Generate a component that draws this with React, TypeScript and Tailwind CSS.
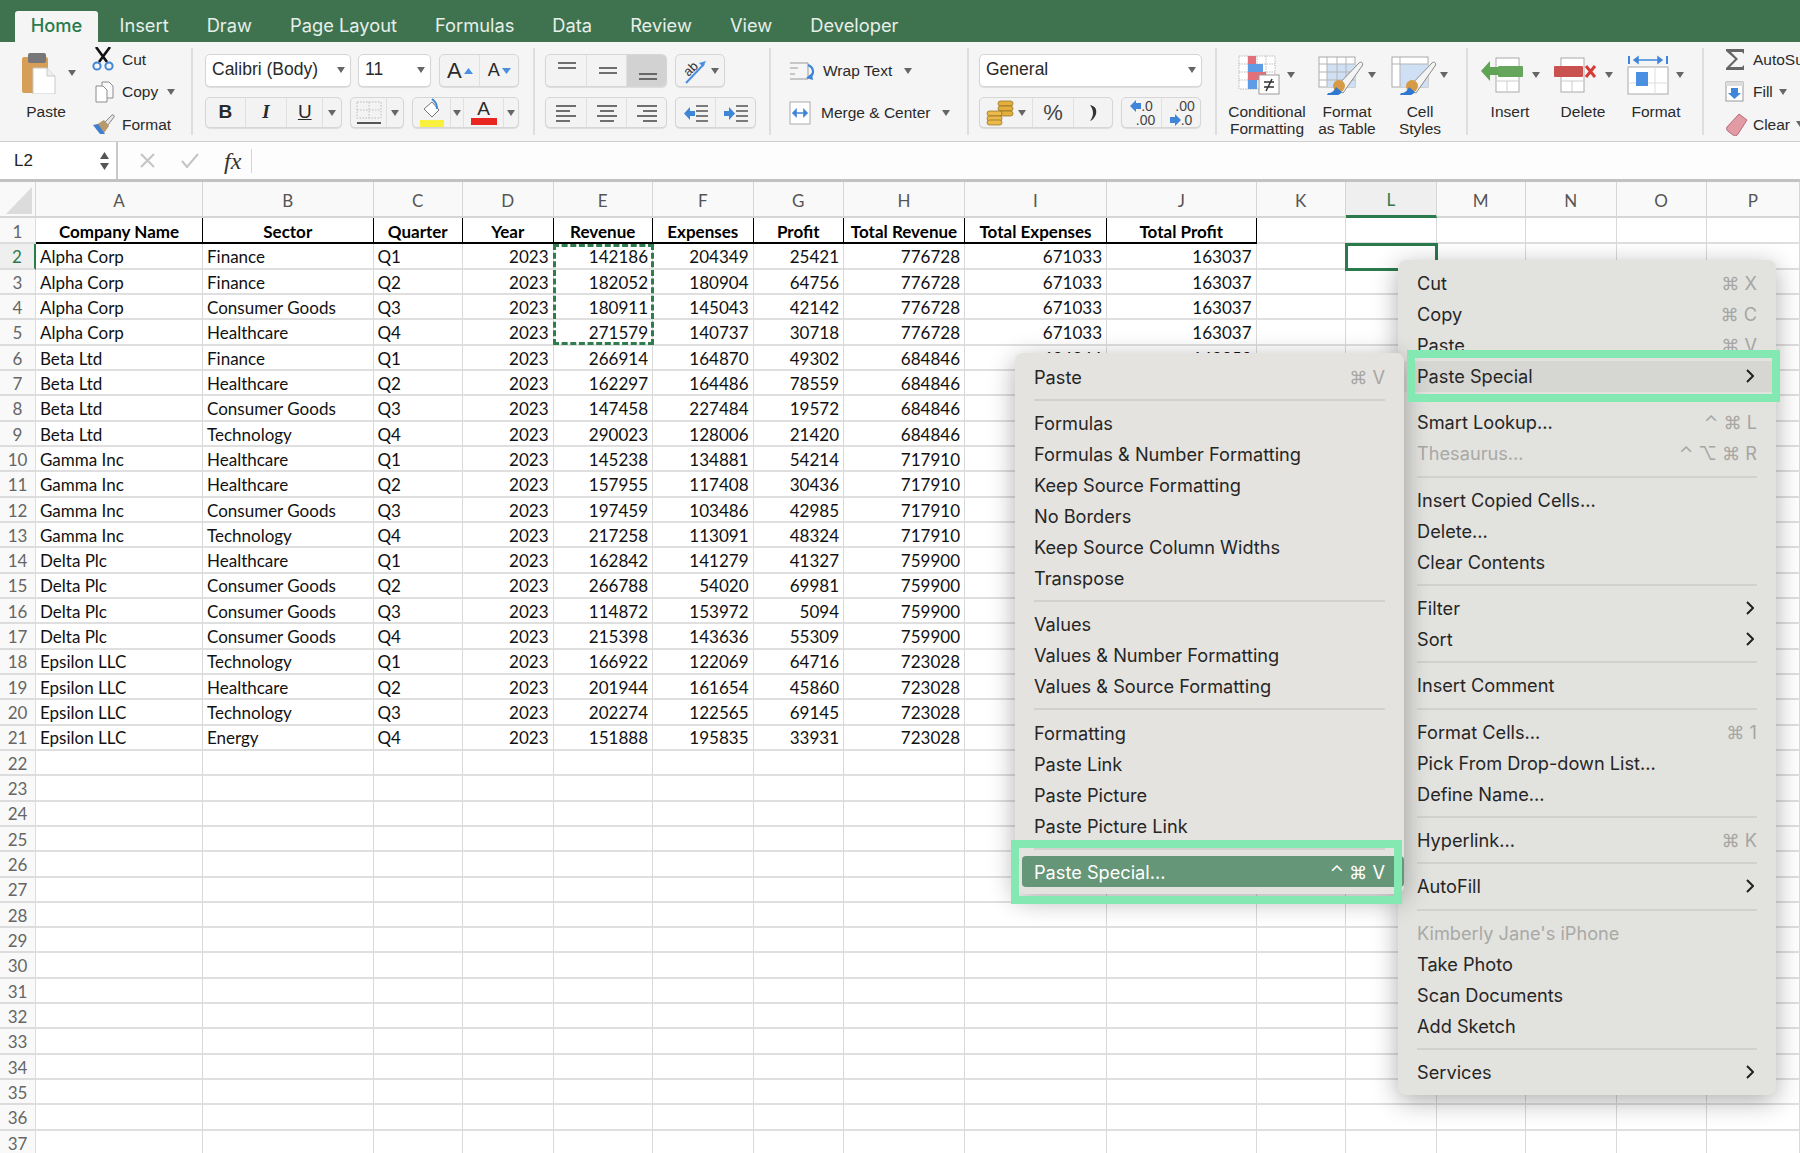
import React from 'react'

// Spreadsheet rows: company, sector, quarter, year, revenue, expenses, profit, totals
const ROWS = [
  ['Alpha Corp', 'Finance', 'Q1', '2023', '142186', '204349', '25421', '776728', '671033', '163037'],
  ['Alpha Corp', 'Finance', 'Q2', '2023', '182052', '180904', '64756', '776728', '671033', '163037'],
  ['Alpha Corp', 'Consumer Goods', 'Q3', '2023', '180911', '145043', '42142', '776728', '671033', '163037'],
  ['Alpha Corp', 'Healthcare', 'Q4', '2023', '271579', '140737', '30718', '776728', '671033', '163037'],
  ['Beta Ltd', 'Finance', 'Q1', '2023', '266914', '164870', '49302', '684846', '684846', '168853'],
  ['Beta Ltd', 'Healthcare', 'Q2', '2023', '162297', '164486', '78559', '684846', '', ''],
  ['Beta Ltd', 'Consumer Goods', 'Q3', '2023', '147458', '227484', '19572', '684846', '', ''],
  ['Beta Ltd', 'Technology', 'Q4', '2023', '290023', '128006', '21420', '684846', '', ''],
  ['Gamma Inc', 'Healthcare', 'Q1', '2023', '145238', '134881', '54214', '717910', '', ''],
  ['Gamma Inc', 'Healthcare', 'Q2', '2023', '157955', '117408', '30436', '717910', '', ''],
  ['Gamma Inc', 'Consumer Goods', 'Q3', '2023', '197459', '103486', '42985', '717910', '', ''],
  ['Gamma Inc', 'Technology', 'Q4', '2023', '217258', '113091', '48324', '717910', '', ''],
  ['Delta Plc', 'Healthcare', 'Q1', '2023', '162842', '141279', '41327', '759900', '', ''],
  ['Delta Plc', 'Consumer Goods', 'Q2', '2023', '266788', '54020', '69981', '759900', '', ''],
  ['Delta Plc', 'Consumer Goods', 'Q3', '2023', '114872', '153972', '5094', '759900', '', ''],
  ['Delta Plc', 'Consumer Goods', 'Q4', '2023', '215398', '143636', '55309', '759900', '', ''],
  ['Epsilon LLC', 'Technology', 'Q1', '2023', '166922', '122069', '64716', '723028', '', ''],
  ['Epsilon LLC', 'Healthcare', 'Q2', '2023', '201944', '161654', '45860', '723028', '', ''],
  ['Epsilon LLC', 'Technology', 'Q3', '2023', '202274', '122565', '69145', '723028', '', ''],
  ['Epsilon LLC', 'Energy', 'Q4', '2023', '151888', '195835', '33931', '723028', '', ''],
]
const HEADINGS = ['Company Name', 'Sector', 'Quarter', 'Year', 'Revenue', 'Expenses', 'Profit', 'Total Revenue', 'Total Expenses', 'Total Profit']
const COLUMNS = ['A', 'B', 'C', 'D', 'E', 'F', 'G', 'H', 'I', 'J', 'K', 'L', 'M', 'N', 'O', 'P']
const TABS = ['Insert', 'Draw', 'Page Layout', 'Formulas', 'Data', 'Review', 'View', 'Developer']

type MenuEntry = { label?: string; keys?: string; arrow?: boolean; dim?: boolean; active?: boolean; hover?: boolean; sep?: boolean }

const CONTEXT_MENU: MenuEntry[] = [
  { label: 'Cut', keys: '⌘ X' },
  { label: 'Copy', keys: '⌘ C' },
  { label: 'Paste', keys: '⌘ V' },
  { label: 'Paste Special', arrow: true, hover: true },
  { sep: true },
  { label: 'Smart Lookup...', keys: '⌃ ⌘ L' },
  { label: 'Thesaurus...', keys: '⌃ ⌥ ⌘ R', dim: true },
  { sep: true },
  { label: 'Insert Copied Cells...' },
  { label: 'Delete...' },
  { label: 'Clear Contents' },
  { sep: true },
  { label: 'Filter', arrow: true },
  { label: 'Sort', arrow: true },
  { sep: true },
  { label: 'Insert Comment' },
  { sep: true },
  { label: 'Format Cells...', keys: '⌘ 1' },
  { label: 'Pick From Drop-down List...' },
  { label: 'Define Name...' },
  { sep: true },
  { label: 'Hyperlink...', keys: '⌘ K' },
  { sep: true },
  { label: 'AutoFill', arrow: true },
  { sep: true },
  { label: "Kimberly Jane's iPhone", dim: true },
  { label: 'Take Photo' },
  { label: 'Scan Documents' },
  { label: 'Add Sketch' },
  { sep: true },
  { label: 'Services', arrow: true },
]

const PASTE_MENU: MenuEntry[] = [
  { label: 'Paste', keys: '⌘ V' },
  { sep: true },
  { label: 'Formulas' },
  { label: 'Formulas & Number Formatting' },
  { label: 'Keep Source Formatting' },
  { label: 'No Borders' },
  { label: 'Keep Source Column Widths' },
  { label: 'Transpose' },
  { sep: true },
  { label: 'Values' },
  { label: 'Values & Number Formatting' },
  { label: 'Values & Source Formatting' },
  { sep: true },
  { label: 'Formatting' },
  { label: 'Paste Link' },
  { label: 'Paste Picture' },
  { label: 'Paste Picture Link' },
  { sep: true },
  { label: 'Paste Special...', keys: '⌃ ⌘ V', active: true },
]

function Caret({ className = '' }: { className?: string }) {
  return (
    <svg width="8" height="6" viewBox="0 0 8 6" className={className}>
      <path d="M0 0h8L4 6z" fill="#666" />
    </svg>
  )
}

function Divider({ className }: { className: string }) {
  return <div className={`mt-[6px] h-[87px] w-[2px] shrink-0 bg-[#dedede] ${className}`} />
}

// Bordered group of ribbon buttons
function Group({ className, children }: { className: string; children: React.ReactNode }) {
  return (
    <div className={`flex rounded-[5px] border border-[#d6d6d6] bg-[#f3f3f3] shadow-[0_1px_1px_rgba(0,0,0,0.1)] ${className}`}>
      {children}
    </div>
  )
}

function Cell({ className, children }: { className: string; children?: React.ReactNode }) {
  return <div className={`flex h-full items-center justify-center border-r border-[#e0e0e0] last:border-r-0 ${className}`}>{children}</div>
}

function PasteIcon() {
  return (
    <svg width="36" height="42" viewBox="0 0 36 42">
      <rect x="1" y="5" width="26" height="36" rx="2" fill="#d59f58" />
      <rect x="7" y="1" width="18" height="10" rx="2" fill="#77777a" />
      <path d="M12 16h14l8 8v18H12z" fill="#fff" stroke="#c9c9c9" />
      <path d="M26 16v8h8" fill="#eee" stroke="#c9c9c9" />
    </svg>
  )
}

function ScissorsIcon() {
  return (
    <svg width="22" height="24" viewBox="0 0 22 24">
      <path d="M4 0l11 15M18 0L7 15" stroke="#111" strokeWidth="2.6" fill="none" />
      <circle cx="5" cy="19" r="3.6" stroke="#3f86d8" strokeWidth="2" fill="none" />
      <circle cx="17" cy="19" r="3.6" stroke="#3f86d8" strokeWidth="2" fill="none" />
    </svg>
  )
}

function CopyIcon() {
  return (
    <svg width="20" height="22" viewBox="0 0 20 22">
      <path d="M7 1h7l4 4v12H7z" fill="#fafafa" stroke="#8c8c8c" />
      <path d="M1 5h7l4 4v12H1z" fill="#fff" stroke="#8c8c8c" />
    </svg>
  )
}

function BrushIcon() {
  return (
    <svg width="24" height="22" viewBox="0 0 24 22">
      <path d="M13 9l7-7c1-1 3 1 2 2l-6 8z" fill="#e6e6e6" stroke="#8a8a8a" />
      <path d="M4 12l8-5 5 6-5 7z" fill="#b79a6c" />
      <path d="M1 12l5-1 7 10-5 0z" fill="#3f7fd0" />
    </svg>
  )
}

function BorderIcon() {
  return (
    <svg width="26" height="24" viewBox="0 0 26 24">
      <path d="M1 1h24v16H1zM13 1v16M1 9h24" stroke="#bbb" strokeDasharray="1.5 1.5" fill="none" />
      <path d="M1 22h24" stroke="#555" strokeWidth="2" />
    </svg>
  )
}

function FillIcon() {
  return (
    <svg width="26" height="30" viewBox="0 0 26 30">
      <path d="M5 11l8-7 7 8-7 7z" fill="#fff" stroke="#777" />
      <path d="M13 1c3 2 5 6 5 10" stroke="#3f86d8" strokeWidth="2" fill="none" />
      <rect x="1" y="22" width="24" height="7" fill="#f8f13f" />
    </svg>
  )
}

function AlignLines({ kind }: { kind: string }) {
  const paths: Record<string, string> = {
    top: 'M3 3h18M3 8h18',
    middle: 'M3 8h18M3 13h18',
    bottom: 'M3 14h18M3 19h18',
    left: 'M1 4h20M1 9h14M1 14h20M1 19h14',
    center: 'M1 4h20M4 9h14M1 14h20M4 19h14',
    right: 'M1 4h20M7 9h14M1 14h20M7 19h14',
  }
  return (
    <svg width="22" height="22" viewBox="0 0 22 22">
      <path d={paths[kind]} stroke="#444" strokeWidth="1.4" fill="none" />
    </svg>
  )
}

function IndentIcon({ flip }: { flip?: boolean }) {
  return (
    <svg width="26" height="22" viewBox="0 0 26 22">
      <path d="M13 4h12M13 9h12M13 14h12M13 19h12" stroke="#555" strokeWidth="1.4" />
      {flip ? <path d="M1 9h5V5l6 6.500-6 6.500v-4H1z" fill="#3f86d8" /> : <path d="M12 9H7V5l-6 6.500L7 18v-4h5z" fill="#3f86d8" />}
    </svg>
  )
}

function OrientationIcon() {
  return (
    <svg width="26" height="28" viewBox="0 0 26 28">
      <path d="M5 26L23 7" stroke="#4a8fe0" strokeWidth="2" />
      <path d="M25 4l-7 2 4 4z" fill="#4a8fe0" />
      <text x="3" y="17" fontSize="13" fill="#333" transform="rotate(-45 9 13)" className="font-['Liberation_Sans',sans-serif]">ab</text>
    </svg>
  )
}

function WrapIcon() {
  return (
    <svg width="28" height="18" viewBox="0 0 28 18">
      <path d="M1 1h18v16H1M1 6h8M1 12h5" stroke="#999" fill="none" />
      <path d="M19 3c7 3 6 10 1 12" stroke="#3f86d8" strokeWidth="2.2" fill="none" />
      <path d="M23 11l-6 5 7 2z" fill="#3f86d8" />
    </svg>
  )
}

function MergeIcon() {
  return (
    <svg width="22" height="24" viewBox="0 0 22 24">
      <rect x="1" y="1" width="20" height="22" fill="#fff" stroke="#aaa" />
      <path d="M4 12h14M4 12l3-3v6zM18 12l-3-3v6z" stroke="#3f86d8" strokeWidth="1.6" fill="#3f86d8" />
    </svg>
  )
}

function CoinsIcon() {
  return (
    <svg width="28" height="26" viewBox="0 0 28 26">
      <rect x="12" y="1" width="15" height="5" rx="2.5" fill="#e2ae3e" stroke="#8d6a1c" strokeWidth="0.7" />
      <rect x="12" y="6" width="15" height="5" rx="2.5" fill="#e2ae3e" stroke="#8d6a1c" strokeWidth="0.7" />
      <rect x="12" y="11" width="15" height="5" rx="2.5" fill="#e2ae3e" stroke="#8d6a1c" strokeWidth="0.7" />
      <rect x="1" y="11" width="15" height="5" rx="2.5" fill="#eab94a" stroke="#8d6a1c" strokeWidth="0.7" />
      <rect x="1" y="16" width="15" height="5" rx="2.5" fill="#eab94a" stroke="#8d6a1c" strokeWidth="0.7" />
      <rect x="1" y="20" width="15" height="5" rx="2.5" fill="#eab94a" stroke="#8d6a1c" strokeWidth="0.7" />
    </svg>
  )
}

function DecimalIcon({ more }: { more?: boolean }) {
  const arrow = <svg width="11" height="12" viewBox="0 0 11 12"><path d={more ? 'M6 0L0 6l6 6V9h5V3H6z' : 'M5 0l6 6-6 6V9H0V3h5z'} fill="#3f86d8" /></svg>
  return (
    <div className="flex flex-col items-center text-[14px] leading-[14px] text-[#444]">
      {more ? <div className="flex items-center">{arrow}<span>.0</span></div> : <span className="pl-[8px]">.00</span>}
      {more ? <span className="pl-[8px]">.00</span> : <div className="flex items-center">{arrow}<span>.0</span></div>}
    </div>
  )
}

function SheetBrush() {
  return (
    <g>
      <path d="M16 34L41 8c2-2 5 0 3 3L25 38z" fill="#f4f4f4" stroke="#8a8a8a" />
      <circle cx="21" cy="31" r="6" fill="#d79a45" />
      <path d="M10 38c4 0 6-2 8-6l6 5c-3 4-9 5-15 3z" fill="#2f78d2" />
    </g>
  )
}

function ConditionalIcon() {
  return (
    <svg width="42" height="40" viewBox="0 0 42 40">
      <path d="M1 1h36v33H1zM10 1v33M19 1v33M28 1v33M1 9h36M1 17h36M1 25h36" stroke="#bdbdbd" fill="#fff" strokeDasharray="1.5 1" />
      <rect x="10" y="1" width="8" height="8" fill="#e2707a" />
      <rect x="10" y="9" width="15" height="8" fill="#5e9de6" />
      <rect x="10" y="17" width="18" height="8" fill="#e2707a" />
      <rect x="10" y="25" width="9" height="9" fill="#5e9de6" />
      <rect x="21" y="20" width="20" height="19" fill="#fff" stroke="#9a9a9a" />
      <path d="M26 27h10M26 32h10M34 24l-6 12" stroke="#333" strokeWidth="1.5" />
    </svg>
  )
}

function TableBrushIcon({ plain }: { plain?: boolean }) {
  return (
    <svg width="46" height="40" viewBox="0 0 46 40">
      <rect x="1" y="2" width="36" height="30" fill="#fff" stroke="#aaa" />
      <rect x="9" y="9" width="28" height="23" fill="#cfe0f5" />
      {!plain && <path d="M1 9h36M1 17h36M1 25h36M9 2v30M19 2v30M28 2v30" stroke="#b5b5b5" />}
      {plain && <path d="M1 9h36M9 2v30" stroke="#b5b5b5" />}
      <SheetBrush />
    </svg>
  )
}

function InsertIcon() {
  return (
    <svg width="44" height="36" viewBox="0 0 44 36">
      <rect x="16" y="1" width="23" height="34" fill="#fff" stroke="#aaa" />
      <path d="M16 24h23M27 24v11" stroke="#ccc" />
      <rect x="18" y="9" width="25" height="11" rx="1" fill="#66a65c" />
      <path d="M1 14l9-10v6h8v8h-8v6z" fill="#5fa454" />
    </svg>
  )
}

function DeleteIcon() {
  return (
    <svg width="44" height="36" viewBox="0 0 44 36">
      <rect x="8" y="1" width="23" height="34" fill="#fff" stroke="#aaa" />
      <path d="M8 24h23M19 24v11" stroke="#ccc" />
      <rect x="1" y="9" width="29" height="11" rx="1" fill="#c9514f" />
      <path d="M33 9l9 11M42 9l-9 11" stroke="#d53c38" strokeWidth="3" />
    </svg>
  )
}

function CellFormatIcon() {
  return (
    <svg width="42" height="40" viewBox="0 0 42 40">
      <path d="M2 1v8M40 1v8" stroke="#3f86d8" strokeWidth="2" />
      <path d="M7 5h28M7 5l4-3v6zM35 5l-4-3v6z" stroke="#3f86d8" strokeWidth="1.5" fill="#3f86d8" />
      <rect x="1" y="12" width="40" height="27" fill="#fff" stroke="#aaa" />
      <path d="M28 12v27M1 28h40" stroke="#ddd" />
      <rect x="9" y="17" width="12" height="14" fill="#4a8fe0" />
    </svg>
  )
}

function SigmaIcon() {
  return (
    <svg width="20" height="23" viewBox="0 0 20 23">
      <path d="M1 1h18v5l-2-2H6l7 7-8 8h12l2-2v5H1v-2l9-9-9-8z" fill="#666" />
    </svg>
  )
}

function FillDownIcon() {
  return (
    <svg width="19" height="21" viewBox="0 0 19 21">
      <rect x="1" y="1" width="17" height="19" fill="#fff" stroke="#999" />
      <rect x="1" y="1" width="17" height="4" fill="#ddd" />
      <path d="M6 7h7v5h3l-6.500 6L3 12h3z" fill="#3f86d8" />
    </svg>
  )
}

function EraserIcon() {
  return (
    <svg width="23" height="23" viewBox="0 0 23 23">
      <path d="M14 1l8 6-9 14c-1 2-3 2-5 1l-4-3c-2-1-3-3-2-5z" fill="#e29aa5" stroke="#b96a76" />
    </svg>
  )
}

function Chevron() {
  return (
    <svg width="8" height="14" viewBox="0 0 8 14" className="mr-[3px]">
      <path d="M1 1l6 6-6 6" stroke="#222" strokeWidth="2" fill="none" />
    </svg>
  )
}

function Ribbon() {
  return (
    <div className="flex h-[99px] w-[1800px] overflow-hidden bg-[#f5f5f5] text-[15.5px] text-[#2a2a2a]">
      {/* Clipboard */}
      <div className="flex w-[191px] shrink-0">
        <div className="flex w-[92px] flex-col items-center pt-[10px]">
          <div className="flex h-[42px] w-[90px] items-center pl-[20px]">
            <PasteIcon />
            <Caret className="ml-[11px]" />
          </div>
          <div className="mt-[8px] w-[90px] text-center leading-[20px]">Paste</div>
        </div>
        <div className="flex flex-col pt-[1px]">
          <div className="flex h-[32.500px] items-center"><div className="flex w-[30px]"><ScissorsIcon /></div>Cut</div>
          <div className="flex h-[32.500px] items-center"><div className="flex w-[30px] pl-[3px]"><CopyIcon /></div>Copy<Caret className="ml-[9px]" /></div>
          <div className="flex h-[32.500px] items-center"><div className="flex w-[30px]"><BrushIcon /></div>Format</div>
        </div>
      </div>
      <Divider className="mr-[12px]" />

      {/* Font */}
      <div className="flex w-[314px] shrink-0 flex-col gap-[10px] pt-[12px]">
        <div className="flex h-[33px] gap-[7px] text-[17.5px]">
          <div className="flex w-[146px] items-center justify-between rounded-[5px] border border-[#d6d6d6] bg-white pb-[2px] pl-[6px] pr-[5px] shadow-[0_1px_1px_rgba(0,0,0,0.1)]">Calibri (Body)<Caret /></div>
          <div className="flex w-[73px] items-center justify-between rounded-[5px] border border-[#d6d6d6] bg-white pb-[2px] pl-[6px] pr-[5px] shadow-[0_1px_1px_rgba(0,0,0,0.1)]">11<Caret /></div>
          <Group className="ml-[1px] w-[80px]">
            <Cell className="w-[41px] text-[22px]">A<svg width="9" height="6" viewBox="0 0 9 6" className="ml-[2px]"><path d="M0 6l4.500-6L9 6z" fill="#4a8fe0" /></svg></Cell>
            <Cell className="w-[38px] text-[18px]">A<svg width="9" height="6" viewBox="0 0 9 6" className="ml-[2px]"><path d="M0 0l4.500 6L9 0z" fill="#4a8fe0" /></svg></Cell>
          </Group>
        </div>
        <div className="flex h-[31px] gap-[8px]">
          <Group className="w-[137px] text-[19px]">
            <Cell className="w-[40px] font-bold">B</Cell>
            <Cell className="w-[42px] font-['Liberation_Serif',serif] font-bold italic">I</Cell>
            <Cell className="w-[36px] underline">U</Cell>
            <Cell className="w-[18px]"><Caret /></Cell>
          </Group>
          <Group className="w-[54px]">
            <Cell className="w-[36px]"><BorderIcon /></Cell>
            <Cell className="w-[16px]"><Caret /></Cell>
          </Group>
          <Group className="w-[107px]">
            <Cell className="w-[38px]"><FillIcon /></Cell>
            <Cell className="w-[13px]"><Caret /></Cell>
            <Cell className="w-[40px] flex-col text-[19px] leading-[18px]">A<div className="h-[7px] w-[26px] bg-[#e8261f]" /></Cell>
            <Cell className="w-[14px]"><Caret /></Cell>
          </Group>
        </div>
      </div>
      <Divider className="ml-[14px] mr-[10px]" />

      {/* Alignment */}
      <div className="flex w-[211px] shrink-0 flex-col gap-[10px] pt-[12px]">
        <div className="flex h-[33px] gap-[8px]">
          <Group className="w-[122px]">
            <Cell className="w-[41px]"><AlignLines kind="top" /></Cell>
            <Cell className="w-[40px]"><AlignLines kind="middle" /></Cell>
            <Cell className="w-[39px] rounded-r-[4px] bg-[#d2d2d2]"><AlignLines kind="bottom" /></Cell>
          </Group>
          <Group className="w-[50px] items-center justify-center gap-[4px]"><OrientationIcon /><Caret /></Group>
        </div>
        <div className="flex h-[31px] gap-[8px]">
          <Group className="w-[122px]">
            <Cell className="w-[41px]"><AlignLines kind="left" /></Cell>
            <Cell className="w-[40px]"><AlignLines kind="center" /></Cell>
            <Cell className="w-[39px]"><AlignLines kind="right" /></Cell>
          </Group>
          <Group className="w-[81px]">
            <Cell className="w-[40px]"><IndentIcon /></Cell>
            <Cell className="w-[39px]"><IndentIcon flip /></Cell>
          </Group>
        </div>
      </div>
      <Divider className="ml-[13px] mr-[18px]" />

      {/* Wrap and merge */}
      <div className="flex w-[166px] shrink-0 flex-col pt-[12px]">
        <div className="flex h-[33px] items-center gap-[6px]"><WrapIcon />Wrap Text<Caret className="ml-[6px]" /></div>
        <div className="mt-[10px] flex h-[31px] items-center gap-[10px]"><MergeIcon />Merge &amp; Center<Caret className="ml-[2px]" /></div>
      </div>
      <Divider className="ml-[12px] mr-[10px]" />

      {/* Number */}
      <div className="flex w-[222.600px] shrink-0 flex-col gap-[10px] pt-[12px]">
        <div className="flex h-[33px] items-center justify-between rounded-[5px] border border-[#d6d6d6] bg-white pb-[2px] pl-[6px] pr-[5px] text-[17.5px] shadow-[0_1px_1px_rgba(0,0,0,0.1)]">General<Caret /></div>
        <div className="flex h-[31px] gap-[8px]">
          <Group className="w-[134px]">
            <Cell className="w-[53px] gap-[4px]"><CoinsIcon /><Caret /></Cell>
            <Cell className="w-[41px] text-[22px] text-[#444]">%</Cell>
            <Cell className="w-[38px]"><svg width="10" height="18" viewBox="0 0 10 18"><path d="M2 1c5 1 7 4 6 9-1 3-3 6-6 7 2-3 3-5 3-8 0-3-1-5-3-8z" fill="#333" /></svg></Cell>
          </Group>
          <Group className="w-[80px]">
            <Cell className="w-[40px]"><DecimalIcon more /></Cell>
            <Cell className="w-[38px]"><DecimalIcon /></Cell>
          </Group>
        </div>
      </div>
      <Divider className="ml-[13px] mr-[7.400px]" />

      {/* Styles */}
      <div className="flex w-[232px] shrink-0 pt-[13px] text-center leading-[17px]">
        <div className="flex w-[86px] flex-col items-center">
          <div className="flex h-[40px] items-center gap-[7px]"><ConditionalIcon /><Caret /></div>
          <div className="mt-[8px]">Conditional<br />Formatting</div>
        </div>
        <div className="flex w-[74px] flex-col items-center">
          <div className="flex h-[40px] items-center gap-[4px]"><TableBrushIcon /><Caret /></div>
          <div className="mt-[8px]">Format<br />as Table</div>
        </div>
        <div className="flex w-[72px] flex-col items-center">
          <div className="flex h-[40px] items-center gap-[3px]"><TableBrushIcon plain /><Caret /></div>
          <div className="mt-[8px]">Cell<br />Styles</div>
        </div>
      </div>
      <Divider className="ml-[10px] mr-[5.500px]" />

      {/* Cells */}
      <div className="flex w-[219px] shrink-0 pt-[13px] text-center leading-[17px]">
        <div className="flex w-[73px] flex-col items-center">
          <div className="flex h-[40px] items-center gap-[8px]"><InsertIcon /><Caret /></div>
          <div className="mt-[8px]">Insert</div>
        </div>
        <div className="flex w-[73px] flex-col items-center">
          <div className="flex h-[40px] items-center gap-[8px]"><DeleteIcon /><Caret /></div>
          <div className="mt-[8px]">Delete</div>
        </div>
        <div className="flex w-[73px] flex-col items-center">
          <div className="flex h-[40px] items-center gap-[7px]"><CellFormatIcon /><Caret /></div>
          <div className="mt-[8px]">Format</div>
        </div>
      </div>
      <Divider className="ml-[9.500px] mr-[21px]" />

      {/* Editing */}
      <div className="flex shrink-0 flex-col pt-[1px]">
        <div className="flex h-[32.500px] items-center"><div className="flex w-[28px]"><SigmaIcon /></div>AutoSum</div>
        <div className="flex h-[32.500px] items-center"><div className="flex w-[28px]"><FillDownIcon /></div>Fill<Caret className="ml-[6px]" /></div>
        <div className="flex h-[32.500px] items-center"><div className="flex w-[28px]"><EraserIcon /></div>Clear<Caret className="ml-[6px]" /></div>
      </div>
    </div>
  )
}

function FormulaBar() {
  return (
    <div className="flex h-[41.300px] shrink-0 items-center border-t border-b-[3px] border-t-[#cfcfcf] border-b-[#c2c2c2] bg-[#fdfdfd]">
      <div className="flex h-full w-[118px] items-center justify-between border-r-2 border-[#c9c9c9] bg-white pl-[14px] pr-[7px] text-[17px] text-[#222]">
        L2
        <div className="flex flex-col gap-[4px]">
          <svg width="9" height="7" viewBox="0 0 9 7"><path d="M0 7l4.500-7L9 7z" fill="#555" /></svg>
          <svg width="9" height="7" viewBox="0 0 9 7"><path d="M0 0l4.500 7L9 0z" fill="#555" /></svg>
        </div>
      </div>
      <svg width="15" height="15" viewBox="0 0 15 15" className="ml-[22px]"><path d="M1 1l13 13M14 1L1 14" stroke="#c4c4c4" strokeWidth="2" /></svg>
      <svg width="18" height="15" viewBox="0 0 18 15" className="ml-[26px]"><path d="M1 8l5 6L17 1" stroke="#c4c4c4" strokeWidth="2" fill="none" /></svg>
      <span className="ml-[25px] font-['Liberation_Serif',serif] text-[24px] italic text-[#333]">fx</span>
      <div className="ml-[10px] h-[24px] w-px bg-[#d4d4d4]" />
    </div>
  )
}

function Sheet() {
  const cells: React.ReactNode[] = []
  const letter = 'flex items-center justify-center border-r border-b-2 border-[#d6d6d6] bg-[#f9f9f9] pt-[2px] text-[#555] text-[17px]'
  cells.push(
    <div key="corner" className="flex items-end justify-end border-r border-b-2 border-[#d6d6d6] bg-[#f9f9f9] pb-[2px] pr-[3px]">
      <svg width="26" height="27" viewBox="0 0 26 27"><path d="M0 27L26 0v27z" fill="#dcdcdc" /></svg>
    </div>,
  )
  COLUMNS.forEach((c) => {
    cells.push(
      <div key={c} className={c === 'L' ? 'flex items-center justify-center border-r border-b-[3px] border-r-[#d6d6d6] border-b-[#2a7a4c] bg-[#efefef] pt-[2px] text-[17px] text-[#2a7a4c]' : letter}>
        {c}
      </div>,
    )
  })
  for (let r = 1; r <= 37; r++) {
    cells.push(
      <div key={`n${r}`} className={r === 2 ? 'flex items-center justify-center border-r-2 border-b-2 border-r-[#2a7a4c] border-b-[#dcdcdc] bg-[#efefef] pt-[2px] text-[#2a7a4c]' : 'flex items-center justify-center border-r border-b-2 border-[#dcdcdc] bg-[#f9f9f9] pt-[2px] text-[#666]'}>
        {r}
      </div>,
    )
    COLUMNS.forEach((c, i) => {
      const header = r === 1 && i < 10
      const value = r === 1 ? HEADINGS[i] : ROWS[r - 2]?.[i]
      let cls = 'flex items-center overflow-hidden whitespace-nowrap border-r border-b-2 border-r-[#d9d9d9] border-b-[#dfdfdf] bg-white px-[4px] pt-[2px] text-[#111]'
      if (header) cls = 'flex items-center justify-center overflow-hidden whitespace-nowrap border-r border-b-2 border-black bg-white pt-[2px] font-bold text-black'
      else if (i > 2) cls += ' justify-end'
      cells.push(<div key={`${c}${r}`} className={cls}>{value}</div>)
    })
  }
  return (
    <div className="relative flex-1 overflow-hidden bg-white">
      <div className="grid grid-cols-[36px_167px_170.5px_89.5px_90.5px_99.5px_100.5px_90.5px_121px_142px_149.5px_89.5px_90.5px_89.5px_90.5px_90px_93.5px] grid-rows-[36px_26px] auto-rows-[25.33px] font-['Lato','Liberation_Sans',sans-serif] text-[17px]">
        {cells}
      </div>
      {/* Copy marquee and active cell */}
      <div className="absolute left-[553px] top-[61.500px] h-[101.500px] w-[101px] border-[3px] border-dashed border-[#2f7d4f]" />
      <div className="absolute left-[1345px] top-[61px] h-[27.500px] w-[92.500px] border-[3px] border-[#2a7a4c]" />
    </div>
  )
}

function MenuRow({ entry }: { entry: MenuEntry }) {
  if (entry.sep) {
    return (
      <div className="flex h-[15.350px] items-center px-[19px]">
        <div className="h-[2px] w-full bg-[#d2d1ce]" />
      </div>
    )
  }
  let row = 'flex h-[31px] items-center justify-between whitespace-nowrap px-[19px]'
  if (entry.active) row += ' ml-[7px] mr-0 rounded-[4px] bg-[#669678] pl-[12px] text-white'
  else if (entry.hover) row += ' bg-[#d6d6d3]'
  if (entry.dim) row += ' text-[#a9a9a6]'
  return (
    <div className={row}>
      <span>{entry.label}</span>
      {entry.keys && <span className={entry.active ? 'text-white' : 'text-[#a6a6a3]'}>{entry.keys}</span>}
      {entry.arrow && <Chevron />}
    </div>
  )
}

function Menu({ items, className }: { items: MenuEntry[]; className: string }) {
  return (
    <div className={`absolute rounded-[8px] font-['Inter','DejaVu_Sans',sans-serif] text-[18.2px] leading-[20px] text-[#262626] shadow-[0_6px_26px_rgba(0,0,0,0.32)] ${className}`}>
      {items.map((entry, i) => (
        <MenuRow key={i} entry={entry} />
      ))}
    </div>
  )
}

export default function App() {
  return (
    <div className="relative flex h-[1153px] w-[1800px] flex-col overflow-hidden bg-white font-['Liberation_Sans','DejaVu_Sans',sans-serif] text-[17px]">
      <div className="flex h-[42px] items-end bg-[#3f7350] pl-[15px] font-['Inter','Liberation_Sans',sans-serif] text-[18.3px] text-[#e6efe9]">
        <div className="flex h-[31px] w-[83px] items-center justify-center rounded-t-[3px] bg-[#f5f5f5] pb-[2px] font-medium text-[#2a7a4c]">Home</div>
        <div className="flex h-[31px] items-center gap-[38px] pb-[2px] pl-[21.500px]">
          {TABS.map((t) => (
            <span key={t}>{t}</span>
          ))}
        </div>
      </div>
      <Ribbon />
      <FormulaBar />
      <Sheet />

      <Menu items={CONTEXT_MENU} className="left-[1398px] top-[260px] h-[835px] w-[378px] bg-[#e2e2df] pt-[7.500px]" />
      <Menu items={PASTE_MENU} className="left-[1015px] top-[352.500px] h-[541px] w-[389px] bg-[#e5e3e0] pt-[8.500px]" />

      {/* Green callouts drawn over the screenshot */}
      <div className="absolute left-[1407px] top-[350px] h-[52px] w-[373px] border-[8px] border-[#84e8b2]" />
      <div className="absolute left-[1011px] top-[840px] h-[64px] w-[391px] border-[8px] border-[#84e8b2]" />
    </div>
  )
}
